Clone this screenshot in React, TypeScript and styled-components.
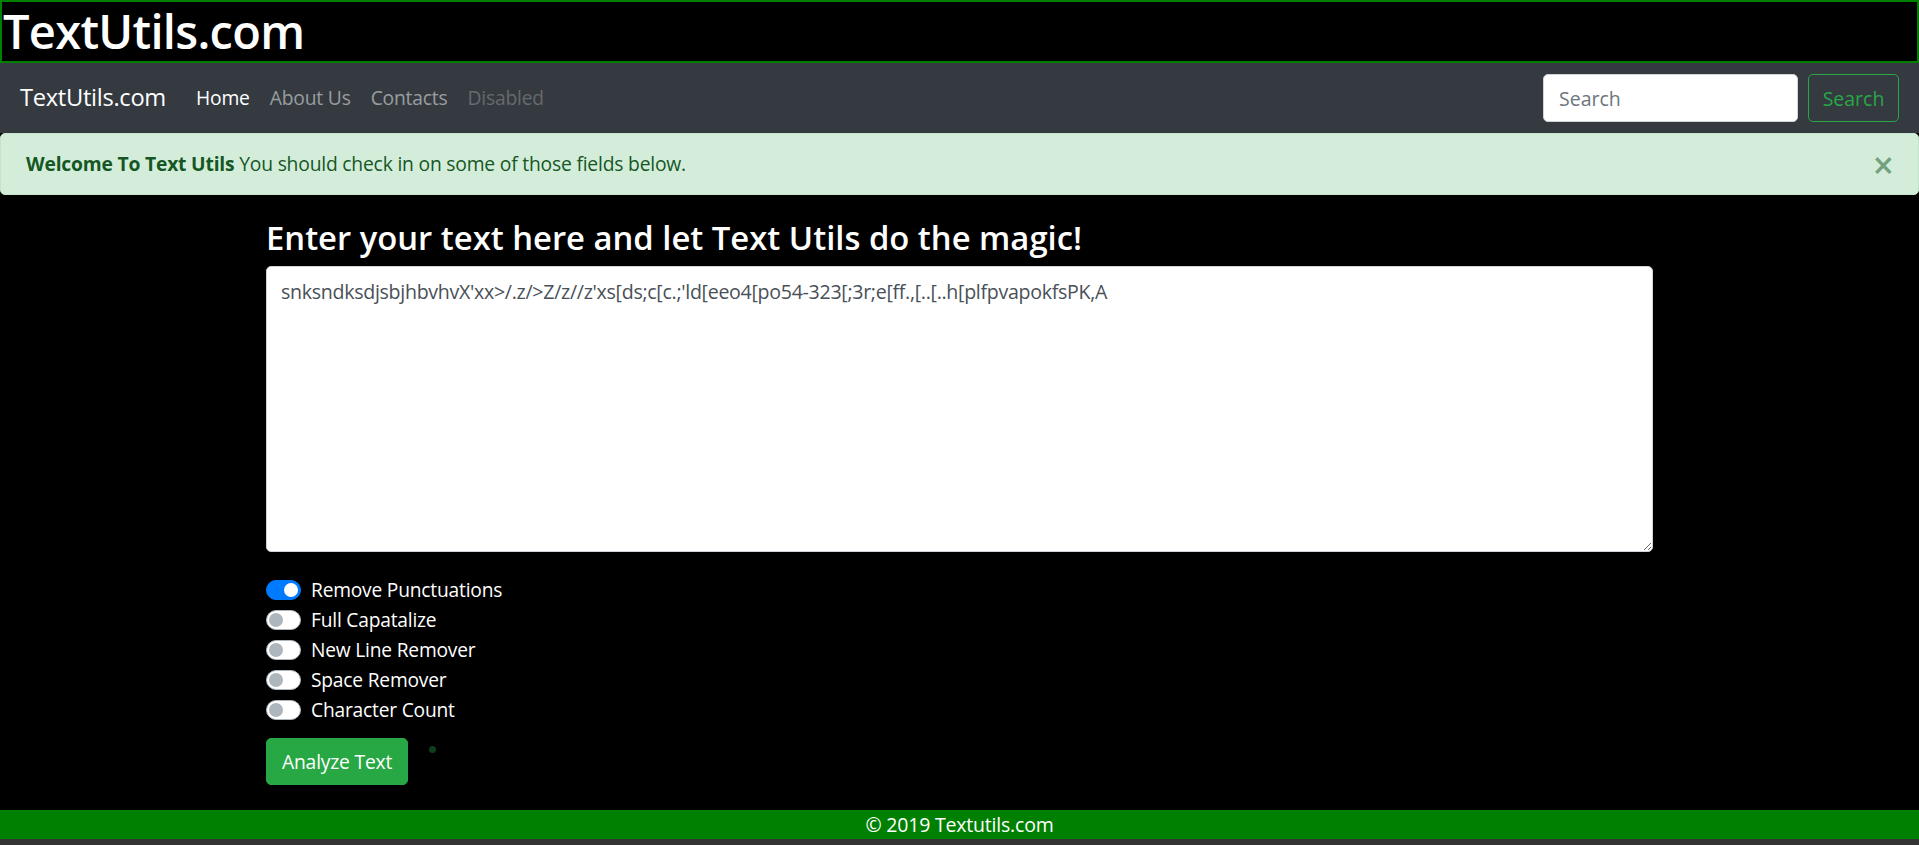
import React from "react";
import styled, { createGlobalStyle, css } from "styled-components";

const GlobalStyle = createGlobalStyle`
  html, body {
    margin: 0;
    padding: 0;
    background: #000;
  }
  body {
    font-family: "Open Sans", "Noto Sans", Arial, sans-serif;
    font-size: 20px;
    line-height: 1.5;
    color: #fff;
  }
  * { box-sizing: border-box; }
`;

const Page = styled.div`
  min-height: 100vh;
  display: flex;
  flex-direction: column;
  background: #000;
`;

const SiteTitle = styled.h1`
  margin: 0;
  border: 2px solid #008000;
  color: #fff;
  font-size: 47px;
  font-weight: 600;
  line-height: 59px;
  padding-left: 1px;
  letter-spacing: -0.7px;
`;

const Navbar = styled.nav`
  height: 70px;
  background: #343a40;
  display: flex;
  align-items: center;
  padding: 0 20px;
`;

const Brand = styled.a`
  color: #fff;
  font-size: 23.7px;
  margin-right: 20px;
  text-decoration: none;
  letter-spacing: -0.3px;
`;

const NavList = styled.ul`
  display: flex;
  list-style: none;
  margin: 0;
  padding: 0;
`;

const NavLink = styled.a<{ $state: "active" | "normal" | "disabled" }>`
  display: block;
  padding: 0 10px;
  font-size: 19.3px;
  line-height: 32px;
  text-decoration: none;
  letter-spacing: -0.2px;
  color: ${(p) =>
    p.$state === "active"
      ? "#fff"
      : p.$state === "disabled"
      ? "rgba(255,255,255,0.25)"
      : "rgba(255,255,255,0.5)"};
`;

const SearchForm = styled.form`
  margin-left: auto;
  display: flex;
  align-items: center;
  gap: 10px;
`;

const SearchInput = styled.input`
  width: 255px;
  height: 48px;
  border: 1px solid #ced4da;
  border-radius: 5px;
  padding: 0 15px;
  font-family: inherit;
  font-size: 19.5px;
  color: #495057;
  background: #fff;
  &::placeholder { color: #6c757d; }
`;

const OutlineButton = styled.button`
  width: 91px;
  height: 48px;
  border: 1px solid #28a745;
  border-radius: 5px;
  background: transparent;
  color: #28a745;
  font-family: inherit;
  font-size: 19.5px;
  padding: 0;
`;

const Alert = styled.div`
  position: relative;
  background: #d4edda;
  border: 1px solid #c3e6cb;
  border-radius: 5px;
  color: #155724;
  padding: 15px 25px;
  font-size: 19.3px;
  line-height: 30px;
  letter-spacing: -0.2px;
`;

const CloseButton = styled.button`
  position: absolute;
  top: 0;
  right: 0;
  height: 100%;
  padding: 0 24px;
  background: transparent;
  border: 0;
  color: #155724;
  opacity: 0.5;
  font-family: "Open Sans", sans-serif;
  font-size: 37px;
  font-weight: 600;
  line-height: 1;
`;

const Main = styled.main`
  flex: 1;
  padding-top: 24px;
`;

const Container = styled.div`
  width: 1387px;
  margin: 0 auto;
`;

const Heading = styled.h1`
  margin: 0 0 9px;
  font-size: 32.8px;
  font-weight: 600;
  line-height: 38px;
  color: #fff;
`;

const TextArea = styled.textarea`
  display: block;
  width: 100%;
  height: 286px;
  border: 1px solid #ced4da;
  border-radius: 5px;
  padding: 10px 14px 7px;
  font-family: inherit;
  font-size: 19.6px;
  line-height: 30px;
  color: #495057;
  background: #fff;
  resize: vertical;
  margin-bottom: 23px;
  letter-spacing: -0.3px;
`;

const SwitchRow = styled.label`
  display: flex;
  align-items: center;
  height: 30px;
  font-size: 19.2px;
  letter-spacing: -0.2px;
  color: #fff;
`;

const Switch = styled.span<{ $on: boolean }>`
  position: relative;
  width: 35px;
  height: 20px;
  border-radius: 10px;
  margin-right: 10px;
  flex-shrink: 0;
  ${(p) =>
    p.$on
      ? css`
          background: #007bff;
          border: 1px solid #007bff;
        `
      : css`
          background: #fff;
          border: 1px solid #adb5bd;
        `}
  &::after {
    content: "";
    position: absolute;
    top: 2px;
    left: ${(p) => (p.$on ? "17px" : "2px")};
    width: 14px;
    height: 14px;
    border-radius: 50%;
    background: ${(p) => (p.$on ? "#fff" : "#adb5bd")};
  }
`;

const ActionRow = styled.div`
  display: flex;
  align-items: flex-start;
  margin-top: 13px;
`;

const PrimaryButton = styled.button`
  height: 47px;
  padding: 0 15px;
  border: 1px solid #28a745;
  border-radius: 5px;
  background: #28a745;
  color: #fff;
  font-family: inherit;
  font-size: 19.3px;
  letter-spacing: -0.2px;
`;

const Dot = styled.span`
  width: 7px;
  height: 7px;
  border-radius: 50%;
  background: #103e1d;
  margin: 8px 0 0 21px;
`;

const Footer = styled.footer`
  background: #008000;
  color: #fff;
  text-align: center;
  font-size: 19.5px;
  line-height: 29px;
  letter-spacing: -0.2px;
`;

const BottomStrip = styled.div`
  height: 6px;
  background: #343434;
`;

const toggles = [
  { label: "Remove Punctuations", on: true },
  { label: "Full Capatalize", on: false },
  { label: "New Line Remover", on: false },
  { label: "Space Remover", on: false },
  { label: "Character Count", on: false },
];

export default function App() {
  return (
    <>
      <GlobalStyle />
      <Page>
        <SiteTitle>TextUtils.com</SiteTitle>
        <Navbar>
          <Brand href="#">TextUtils.com</Brand>
          <NavList>
            <li><NavLink $state="active" href="#">Home</NavLink></li>
            <li><NavLink $state="normal" href="#">About Us</NavLink></li>
            <li><NavLink $state="normal" href="#">Contacts</NavLink></li>
            <li><NavLink $state="disabled" href="#">Disabled</NavLink></li>
          </NavList>
          <SearchForm onSubmit={(e) => e.preventDefault()}>
            <SearchInput type="search" placeholder="Search" />
            <OutlineButton type="submit">Search</OutlineButton>
          </SearchForm>
        </Navbar>
        <Alert>
          <strong>Welcome To Text Utils</strong> You should check in on some of those fields below.
          <CloseButton type="button" aria-label="Close">×</CloseButton>
        </Alert>
        <Main>
          <Container>
            <Heading>Enter your text here and let Text Utils do the magic!</Heading>
            <TextArea
              defaultValue={"snksndksdjsbjhbvhvX'xx>/.z/>Z/z//z'xs[ds;c[c.;'ld[eeo4[po54-323[;3r;e[ff.,[..[..h[plfpvapokfsPK,A"}
            />
            {toggles.map((t) => (
              <SwitchRow key={t.label}>
                <Switch $on={t.on} />
                {t.label}
              </SwitchRow>
            ))}
            <ActionRow>
              <PrimaryButton type="button">Analyze Text</PrimaryButton>
              <Dot />
            </ActionRow>
          </Container>
        </Main>
        <Footer>© 2019 Textutils.com</Footer>
        <BottomStrip />
      </Page>
    </>
  );
}
